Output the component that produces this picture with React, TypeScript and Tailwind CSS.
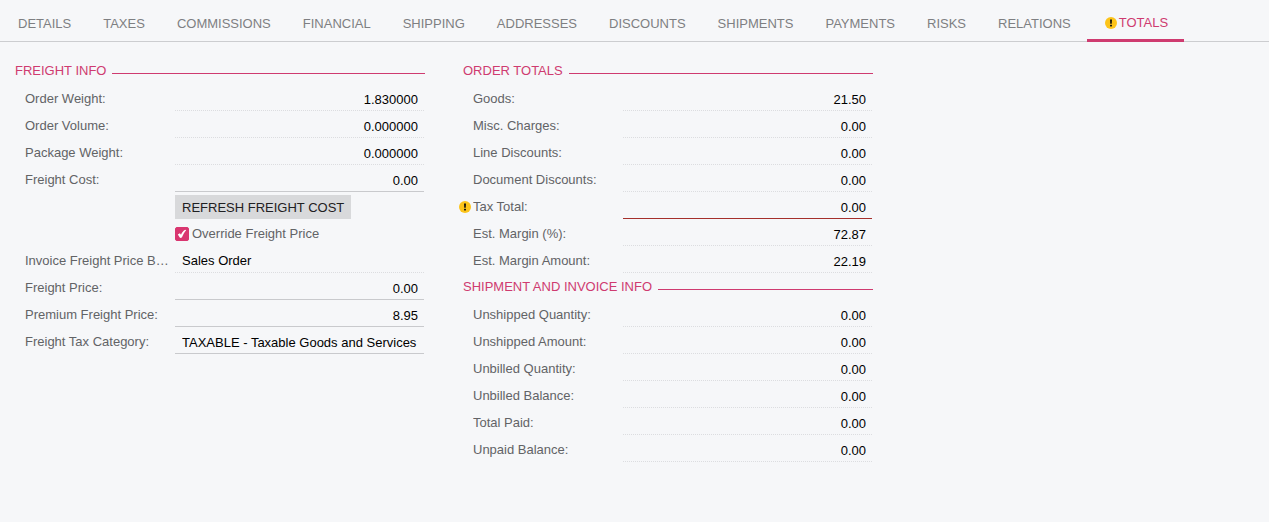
import { useId, useState, type ReactNode } from 'react';
import clsx from 'clsx';

type FieldKind = 'readonly' | 'editable' | 'warning';

interface Field {
  label: string;
  value: string;
  kind?: FieldKind;
}

const tabs = [
  'Details',
  'Taxes',
  'Commissions',
  'Financial',
  'Shipping',
  'Addresses',
  'Discounts',
  'Shipments',
  'Payments',
  'Risks',
  'Relations',
  'Totals',
];

const freightFields: Field[] = [
  { label: 'Order Weight:', value: '1.830000' },
  { label: 'Order Volume:', value: '0.000000' },
  { label: 'Package Weight:', value: '0.000000' },
  { label: 'Freight Cost:', value: '0.00', kind: 'editable' },
];

const priceFields: Field[] = [
  { label: 'Freight Price:', value: '0.00', kind: 'editable' },
  { label: 'Premium Freight Price:', value: '8.95', kind: 'editable' },
];

const totalFields: Field[] = [
  { label: 'Goods:', value: '21.50' },
  { label: 'Misc. Charges:', value: '0.00' },
  { label: 'Line Discounts:', value: '0.00' },
  { label: 'Document Discounts:', value: '0.00' },
  { label: 'Tax Total:', value: '0.00', kind: 'warning' },
  { label: 'Est. Margin (%):', value: '72.87' },
  { label: 'Est. Margin Amount:', value: '22.19' },
];

const shipmentFields: Field[] = [
  { label: 'Unshipped Quantity:', value: '0.00' },
  { label: 'Unshipped Amount:', value: '0.00' },
  { label: 'Unbilled Quantity:', value: '0.00' },
  { label: 'Unbilled Balance:', value: '0.00' },
  { label: 'Total Paid:', value: '0.00' },
  { label: 'Unpaid Balance:', value: '0.00' },
];

const controlBase =
  'h-6 w-full min-w-0 appearance-none rounded-none border-b bg-transparent text-black outline-none';

const borderFor: Record<FieldKind, string> = {
  readonly: 'border-dotted border-[#dcdde0]',
  editable: 'border-[#c9cacd]',
  warning: 'border-[#a5302c]',
};

function WarningIcon({ className }: { className?: string }) {
  return (
    <svg viewBox="0 0 12 12" className={clsx('size-3 shrink-0', className)} aria-hidden="true">
      <circle cx="6" cy="6" r="6" fill="#fcc41a" />
      <path d="M5 2.500h2l-.2 4.300H5.200z" fill="#1c1a10" />
      <rect x="5" y="7.700" width="2" height="1.800" rx=".4" fill="#1c1a10" />
    </svg>
  );
}

function Group({ title, children }: { title: string; children: ReactNode }) {
  return (
    <section>
      <h2 className="flex h-[27px] items-center gap-[6px] text-[#cf3b70]">
        <span>{title}</span>
        <span className="mt-[6px] flex-1 border-t border-[#cf3b70]" />
      </h2>
      <div className="pr-px pl-[10px]">{children}</div>
    </section>
  );
}

function Row({
  label,
  htmlFor,
  warning,
  children,
}: {
  label?: string;
  htmlFor?: string;
  warning?: boolean;
  children: ReactNode;
}) {
  return (
    <div className="relative flex h-[27px] items-end">
      {warning && <WarningIcon className="absolute top-[9px] -left-[14px]" />}
      <div className="flex h-6 w-[150px] shrink-0 items-center pr-[6px]">
        {label && (
          <label htmlFor={htmlFor} className="truncate text-[#626366]">
            {label}
          </label>
        )}
      </div>
      {children}
    </div>
  );
}

function NumberRow({ label, value, kind = 'readonly' }: Field) {
  const id = useId();

  return (
    <Row label={label} htmlFor={id} warning={kind === 'warning'}>
      <input
        id={id}
        type="text"
        defaultValue={value}
        readOnly={kind !== 'editable'}
        className={clsx(controlBase, 'px-[6px] pt-[2px] text-right', borderFor[kind])}
      />
    </Row>
  );
}

export default function App() {
  const [activeTab, setActiveTab] = useState('Totals');
  const [override, setOverride] = useState(true);

  return (
    <div className="min-h-screen bg-[#f6f7f9] font-['Liberation_Sans',Arial,sans-serif] text-[13px] leading-4">
      {/* Tabs */}
      <div role="tablist" className="flex h-[42px] border-b border-[#cccdd0] pl-[2px]">
        {tabs.map((tab) => (
          <button
            key={tab}
            type="button"
            role="tab"
            aria-selected={activeTab === tab}
            onClick={() => setActiveTab(tab)}
            className={clsx(
              'flex h-[42px] shrink-0 items-center px-4 uppercase',
              activeTab === tab
                ? 'border-b-[3px] border-[#cf3b70] pt-[6px] text-[#cf3b70]'
                : 'pt-[5px] text-[#7e7f82]'
            )}
          >
            {tab === 'Totals' && <WarningIcon className="mx-[2px]" />}
            {tab}
          </button>
        ))}
      </div>

      <main className="flex gap-[38px] px-[15px] pt-[15px]">
        <div className="max-w-[410px] flex-1">
          <Group title="FREIGHT INFO">
            {freightFields.map((f) => (
              <NumberRow key={f.label} {...f} />
            ))}

            <Row>
              <button
                type="button"
                className="h-6 bg-[#d8d9db] px-[7px] pt-[2px] whitespace-nowrap text-[#1f2022] hover:bg-[#cbccce]"
              >
                REFRESH FREIGHT COST
              </button>
            </Row>

            <Row>
              <label className="flex h-6 items-center gap-[3px] text-[#626366]">
                <span className="relative flex size-[14px]">
                  <input
                    type="checkbox"
                    checked={override}
                    onChange={(e) => setOverride(e.target.checked)}
                    className="peer size-[14px] appearance-none rounded-[2px] border border-[#a9aaad] checked:border-[#d93670] checked:bg-[#d93670]"
                  />
                  <svg
                    viewBox="0 0 14 14"
                    className="pointer-events-none absolute inset-0 hidden size-[14px] peer-checked:block"
                    aria-hidden="true"
                  >
                    <path d="M2.800 7.400 4.900 6.200 6 7.700C7 5.500 8.400 3.600 10.200 2.800L11.200 3.200C9.400 5.300 8 7.600 6.900 10.500L5.100 10.900Z" fill="#fff" />
                  </svg>
                </span>
                Override Freight Price
              </label>
            </Row>

            <Row label="Invoice Freight Price Based On:" htmlFor="price-basis">
              <select
                id="price-basis"
                disabled
                className={clsx(controlBase, 'px-[7px] opacity-100', borderFor.readonly)}
              >
                <option>Sales Order</option>
              </select>
            </Row>

            {priceFields.map((f) => (
              <NumberRow key={f.label} {...f} />
            ))}

            <Row label="Freight Tax Category:" htmlFor="tax-category">
              <input
                id="tax-category"
                type="text"
                defaultValue="TAXABLE - Taxable Goods and Services"
                className={clsx(controlBase, 'px-[7px] pt-[2px]', borderFor.editable)}
              />
            </Row>
          </Group>
        </div>

        <div className="max-w-[410px] flex-1">
          <Group title="ORDER TOTALS">
            {totalFields.map((f) => (
              <NumberRow key={f.label} {...f} />
            ))}
          </Group>
          <Group title="SHIPMENT AND INVOICE INFO">
            {shipmentFields.map((f) => (
              <NumberRow key={f.label} {...f} />
            ))}
          </Group>
        </div>
      </main>
    </div>
  );
}
